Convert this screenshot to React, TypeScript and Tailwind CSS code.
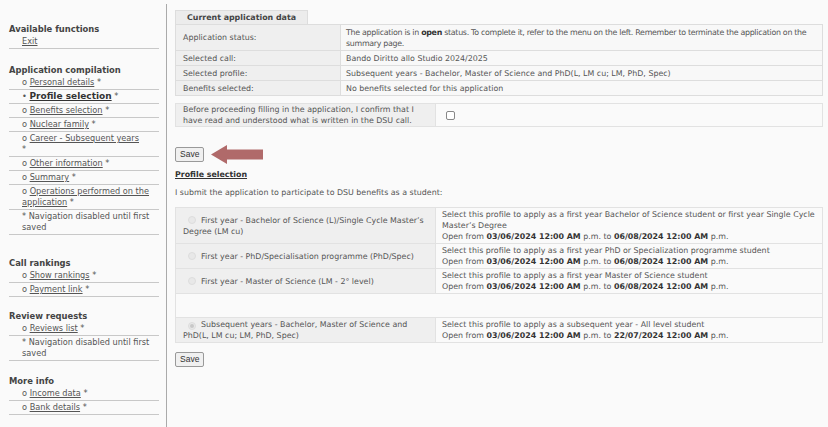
type NavItem = { label: string; bullet?: string; active?: boolean; note?: boolean; star?: boolean; wrapStar?: boolean };

const sections: { title: string; items: NavItem[]; gap: string }[] = [
  { title: 'Available functions', gap: '', items: [{ label: 'Exit', bullet: '' }] },
  {
    title: 'Application compilation',
    gap: 'mt-[15px]',
    items: [
      { label: 'Personal details', star: true },
      { label: 'Profile selection', bullet: '•', active: true, star: true },
      { label: 'Benefits selection', star: true },
      { label: 'Nuclear family', star: true },
      { label: 'Career - Subsequent years', star: true, wrapStar: true },
      { label: 'Other information', star: true },
      { label: 'Summary', star: true },
      { label: 'Operations performed on the application', star: true },
      { label: '* Navigation disabled until first saved', note: true },
    ],
  },
  {
    title: 'Call rankings',
    gap: 'mt-[22px]',
    items: [
      { label: 'Show rankings', star: true },
      { label: 'Payment link', star: true },
    ],
  },
  {
    title: 'Review requests',
    gap: 'mt-[13px]',
    items: [
      { label: 'Reviews list', star: true },
      { label: '* Navigation disabled until first saved', note: true },
    ],
  },
  {
    title: 'More info',
    gap: 'mt-[14px]',
    items: [
      { label: 'Income data', star: true },
      { label: 'Bank details', star: true },
    ],
  },
];

const appData = [
  {
    label: 'Application status:',
    value: (
      <span className="tracking-[-0.3px]">
        The application is in <b className="text-[#333]">open</b> status. To complete it, refer to the menu on the left. Remember to terminate the application on the summary page.
      </span>
    ),
  },
  { label: 'Selected call:', value: 'Bando Diritto allo Studio 2024/2025' },
  { label: 'Selected profile:', value: 'Subsequent years - Bachelor, Master of Science and PhD(L, LM cu; LM, PhD, Spec)' },
  { label: 'Benefits selected:', value: 'No benefits selected for this application' },
];

const profiles = [
  {
    name: 'First year - Bachelor of Science (L)/Single Cycle Master\u2019s Degree (LM cu)',
    desc: 'Select this profile to apply as a first year Bachelor of Science student or first year Single Cycle Master\u2019s Degree',
    to: '06/08/2024',
  },
  {
    name: 'First year - PhD/Specialisation programme (PhD/Spec)',
    desc: 'Select this profile to apply as a first year PhD or Specialization programme student',
    to: '06/08/2024',
  },
  {
    name: 'First year - Master of Science (LM - 2° level)',
    desc: 'Select this profile to apply as a first year Master of Science student',
    to: '06/08/2024',
  },
  null,
  {
    name: 'Subsequent years - Bachelor, Master of Science and PhD(L, LM cu; LM, PhD, Spec)',
    desc: 'Select this profile to apply as a subsequent year - All level student',
    to: '22/07/2024',
    checked: true,
  },
];

function Radio({ checked }: { checked?: boolean }) {
  return (
    <span className="inline-flex w-[8px] h-[8px] rounded-full border border-[#ddd] bg-[#e8e8e8] items-center justify-center align-[-1px] ml-[5px] mr-[5px]">
      {checked && <span className="w-[4px] h-[4px] rounded-full bg-[#c8c8c8]" />}
    </span>
  );
}

function SaveButton() {
  return (
    <button className="border border-[#999] bg-[#f0f0f0] rounded-[2px] px-[4px] h-[15px] leading-[13px] text-[8.5px] text-[#333] font-['Liberation_Sans',Arial,sans-serif]">
      Save
    </button>
  );
}

export default function App() {
  return (
    <div className="w-[828px] h-[427px] bg-[#fafafa] flex text-[7.9px] leading-[11px] text-[#555] font-['DejaVu_Sans',Verdana,sans-serif] overflow-hidden">
      <aside className="w-[167px] shrink-0 pt-[19px] pl-[9px] pr-[7px] border-r border-[#aaa] mt-[4px] text-[8.2px]">
        {sections.map((s) => (
          <div key={s.title} className={s.gap}>
            <div className="font-bold text-[#444] text-[8.4px] leading-[12px]">{s.title}</div>
            {s.items.map((it, j) => (
              <div key={j} className="border-b border-[#c8c8c8] pl-[13px] py-[1px]">
                {it.note ? (
                  <span>{it.label}</span>
                ) : (
                  <>
                    {it.bullet ?? 'o'}
                    {(it.bullet ?? 'o') && ' '}
                    <span className={it.active ? 'underline font-bold text-[#333] text-[9px]' : 'underline'}>{it.label}</span>
                    {it.star && (it.wrapStar ? <span className="block">*</span> : <span> *</span>)}
                  </>
                )}
              </div>
            ))}
          </div>
        ))}
      </aside>

      <main className="flex-1 pl-[8px] pr-[5px] pt-[10px]">
        <div className="inline-block bg-[#ececec] border border-b-0 border-[#ddd] h-[14px] leading-[14px] font-bold text-[#444] w-[133px] text-center">
          Current application data
        </div>
        <table className="w-full border-collapse">
          <tbody>
            {appData.map((r) => (
              <tr key={r.label}>
                <td className="w-[165px] bg-[#efefef] border border-[#ddd] px-[7px] py-[1.5px] align-middle">{r.label}</td>
                <td className="bg-[#f8f8f8] border border-[#ddd] pl-[5px] pr-[2px] py-[1.5px]">{r.value}</td>
              </tr>
            ))}
          </tbody>
        </table>

        <table className="w-full border-collapse mt-[7px]">
          <tbody>
            <tr>
              <td className="w-[260px] bg-[#efefef] border border-[#e2e2e2] px-[7px] py-0">
                Before proceeding filling in the application, I confirm that I have read and understood what is written in the DSU call.
              </td>
              <td className="bg-[#fafafa] border border-[#e2e2e2] px-[10px] py-0">
                <span className="block w-[9px] h-[9px] border border-[#888] rounded-[2px] bg-white" />
              </td>
            </tr>
          </tbody>
        </table>

        <div className="flex items-center gap-[7px] mt-[18px]">
          <SaveButton />
          <svg width="52" height="19" viewBox="0 0 52 19">
            <polygon points="0,9.5 16,0 16,4.5 52,4.5 52,14.5 16,14.5 16,19" fill="#b06a6a" />
          </svg>
        </div>

        <div className="mt-[5px] font-bold underline text-[#333]">Profile selection</div>
        <div className="mt-[7px]">I submit the application to participate to DSU benefits as a student:</div>

        <table className="w-full border-collapse mt-[9px]">
          <tbody>
            {profiles.map((p, i) =>
              p ? (
                <tr key={i}>
                  <td className="w-[260px] bg-[#efefef] border border-[#e2e2e2] px-[7px] py-[1px] align-middle">
                    <Radio checked={p.checked} />
                    {p.name}
                  </td>
                  <td className="bg-[#fafafa] border border-[#e2e2e2] pl-[6px] pr-[2px] py-[1px]">
                    {p.desc}
                    <br />
                    Open from <b className="text-[#333]">03/06/2024 12:00 AM</b> p.m. to <b className="text-[#333]">{p.to} 12:00 AM</b> p.m.
                  </td>
                </tr>
              ) : (
                <tr key={i}>
                  <td colSpan={2} className="h-[24px] bg-[#fafafa] border border-[#e2e2e2]" />
                </tr>
              )
            )}
          </tbody>
        </table>

        <div className="mt-[9px]">
          <SaveButton />
        </div>
      </main>
    </div>
  );
}
